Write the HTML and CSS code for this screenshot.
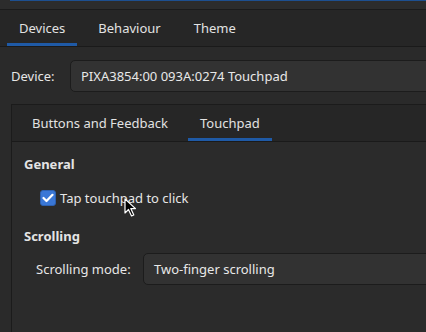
FILE: index.html
```html
<!DOCTYPE html>
<html>
<head>
<meta charset="utf-8">
<link rel="stylesheet" href="styles.css">
</head>
<body>
<div class="window">
  <div class="topstrip"><div class="topline"></div></div>
  <div class="tabbar">
    <div class="tab active">Devices</div>
    <div class="tab">Behaviour</div>
    <div class="tab">Theme</div>
  </div>
  <div class="page">
    <div class="devrow">
      <span class="label">Device:</span>
      <div class="combo">PIXA3854:00 093A:0274 Touchpad</div>
    </div>
    <div class="frame">
      <div class="tabbar inner">
        <div class="tab">Buttons and Feedback</div>
        <div class="tab active">Touchpad</div>
      </div>
      <div class="content">
        <div class="heading">General</div>
        <label class="check"><span class="box"><svg width="12" height="10" viewBox="0 0 12 10"><path d="M1.5 5 L4.5 8 L10.5 1.8" fill="none" stroke="#fff" stroke-width="2.2" stroke-linecap="round" stroke-linejoin="round"/></svg></span>Tap touchpad to click</label>
        <div class="heading second">Scrolling</div>
        <div class="moderow">
          <span class="label">Scrolling mode:</span>
          <div class="combo">Two-finger scrolling</div>
        </div>
      </div>
    </div>
  </div>
  <svg class="cursor" width="14" height="20" viewBox="0 0 14 20"><path d="M1 1 L1 15 L4.5 11.5 L7.5 18 L9.8 17 L6.8 10.6 L11.5 10.6 Z" fill="#000" stroke="#fff" stroke-width="1.2" stroke-linejoin="round"/></svg>
</div>
</body>
</html>
```
FILE: styles.css
```css
html, body {
  margin: 0;
  padding: 0;
  background: #2a2a2a;
}
body {
  width: 426px;
  height: 332px;
  overflow: hidden;
  font-family: "Noto Sans", "DejaVu Sans", sans-serif;
  font-size: 13px;
  color: #e6e6e6;
}
.window {
  position: relative;
  width: 426px;
  height: 332px;
  overflow: hidden;
}
.topstrip {
  height: 9px;
  background: #2c2c2c;
  border-bottom: 1px solid #1b1b1b;
}
.topline {
  margin-left: 10px;
  height: 1px;
  background: #1d4f8f;
}
.tabbar {
  display: flex;
  height: 36px;
  background: #262626;
  border-bottom: 1px solid #1a1a1a;
  padding-left: 7px;
}
.tab {
  padding: 0 12px;
  line-height: 36px;
  box-sizing: border-box;
  height: 36px;
  margin-right: 9px;
  color: #e2e2e2;
}
.tab.active {
  box-shadow: inset 0 -3px 0 #1f5aa6;
}
.page {
  padding: 13px 0 0 11px;
}
.devrow {
  display: flex;
  align-items: center;
  height: 32px;
}
.devrow .label {
  width: 59px;
}
.combo {
  flex: 1;
  height: 32px;
  box-sizing: border-box;
  margin-right: -10px;
  background: #323232;
  border: 1px solid #1c1c1c;
  border-radius: 5px;
  padding-left: 10px;
  line-height: 30px;
  color: #e8e8e8;
}
.frame {
  margin-top: 12px;
  border-left: 1px solid #1b1b1b;
  border-top: 1px solid #1b1b1b;
  height: 240px;
}
.tabbar.inner {
  padding-left: 8px;
}
.tabbar.inner .tab {
  margin-right: 8px;
}
.content {
  padding: 10px 0 0 12px;
  background: #2b2b2b;
  height: 200px;
}
.heading {
  font-weight: bold;
  line-height: 24px;
  color: #e4e4e4;
}
.heading.second {
  margin-top: 17px;
}
.check {
  display: flex;
  align-items: center;
  margin: 13px 0 0 16px;
  line-height: 18px;
}
.box {
  width: 16px;
  height: 16px;
  border-radius: 3px;
  background: #3a77d6;
  box-sizing: border-box;
  border: 1px solid #2d60b0;
  display: flex;
  align-items: center;
  justify-content: center;
  margin-right: 4px;
}
.moderow {
  display: flex;
  align-items: center;
  height: 32px;
  margin-top: 5px;
  padding-left: 12px;
}
.moderow .label {
  width: 107px;
}
.cursor {
  position: absolute;
  left: 124px;
  top: 198px;
}
```
